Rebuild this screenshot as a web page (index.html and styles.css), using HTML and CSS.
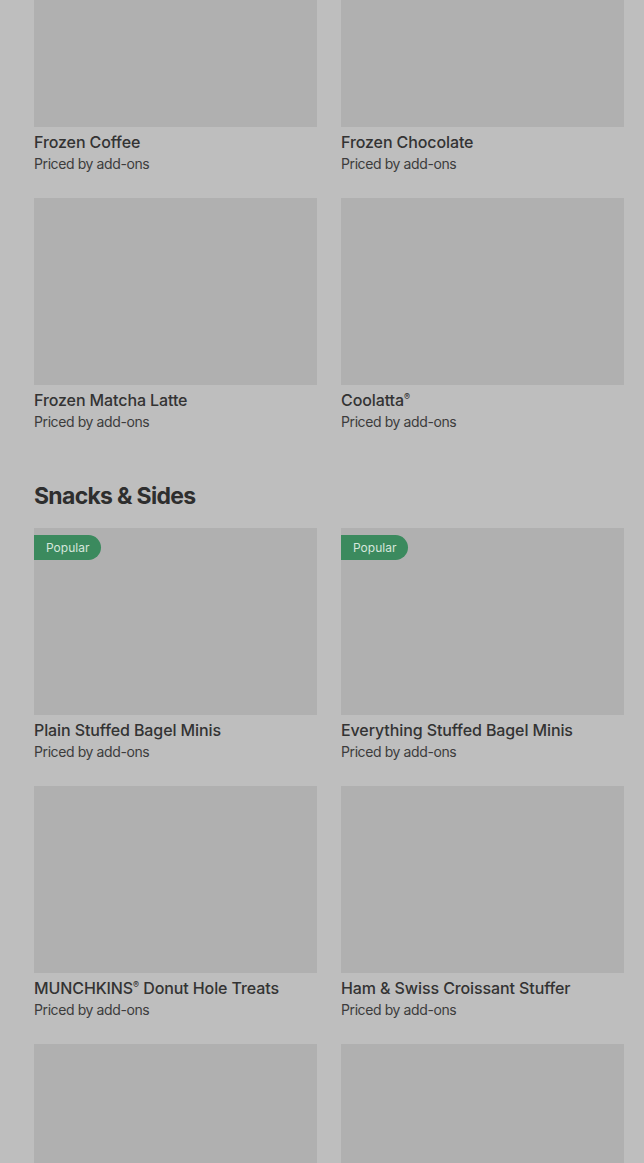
FILE: index.html
```html
<!DOCTYPE html>
<html lang="en">
<head>
<meta charset="utf-8">
<title>Menu</title>
<link rel="stylesheet" href="styles.css">
</head>
<body>
<main class="page">
  <section class="section first">
    <div class="grid">
      <div class="card"><div class="thumb"></div><div class="name">Frozen Coffee</div><div class="price">Priced by add-ons</div></div>
      <div class="card"><div class="thumb"></div><div class="name">Frozen Chocolate</div><div class="price">Priced by add-ons</div></div>
      <div class="card"><div class="thumb"></div><div class="name">Frozen Matcha Latte</div><div class="price">Priced by add-ons</div></div>
      <div class="card"><div class="thumb"></div><div class="name">Coolatta<sup>®</sup></div><div class="price">Priced by add-ons</div></div>
    </div>
  </section>
  <section class="section">
    <h2 class="heading">Snacks &amp; Sides</h2>
    <div class="grid">
      <div class="card"><div class="thumb"><span class="badge">Popular</span></div><div class="name">Plain Stuffed Bagel Minis</div><div class="price">Priced by add-ons</div></div>
      <div class="card"><div class="thumb"><span class="badge">Popular</span></div><div class="name">Everything Stuffed Bagel Minis</div><div class="price">Priced by add-ons</div></div>
      <div class="card"><div class="thumb"></div><div class="name">MUNCHKINS<sup>®</sup> Donut Hole Treats</div><div class="price">Priced by add-ons</div></div>
      <div class="card"><div class="thumb"></div><div class="name">Ham &amp; Swiss Croissant Stuffer</div><div class="price">Priced by add-ons</div></div>
      <div class="card"><div class="thumb"></div></div>
      <div class="card"><div class="thumb"></div></div>
    </div>
  </section>
</main>
</body>
</html>
```

FILE: styles.css
```css
html, body {
  margin: 0;
  padding: 0;
  background: #bebebe;
}
body {
  font-family: Inter, "Noto Sans", "Liberation Sans", sans-serif;
  color: #333333;
  overflow: hidden;
}
.page {
  padding: 0 20px 0 34px;
}
.section.first {
  margin-top: -60px;
}
.grid {
  display: grid;
  grid-template-columns: 283px 283px;
  column-gap: 24px;
  row-gap: 23px;
}
.card {
  display: flex;
  flex-direction: column;
}
.thumb {
  position: relative;
  height: 187px;
  background: #b0b0b0;
  margin-bottom: 4px;
}
.badge {
  position: absolute;
  top: 7px;
  left: 0;
  height: 25px;
  line-height: 25px;
  padding: 0 12px;
  background: #3b8a5e;
  color: #d6e6dc;
  font-size: 12px;
  border-radius: 0 13px 13px 0;
}
.name {
  font-size: 16px;
  font-weight: 500;
  line-height: 20px;
  padding-top: 1px;
  color: #333333;
  letter-spacing: -0.1px;
}
.name sup {
  font-size: 9px;
  line-height: 0;
  vertical-align: 6px;
}
.price {
  font-size: 14px;
  line-height: 22px;
  padding-top: 1px;
  color: #3c3c3c;
  letter-spacing: -0.4px;
}
.heading {
  margin: 47px 0 16px;
  font-size: 23px;
  line-height: 32px;
  font-weight: 700;
  letter-spacing: -0.7px;
  color: #2e2e2e;
}
```
